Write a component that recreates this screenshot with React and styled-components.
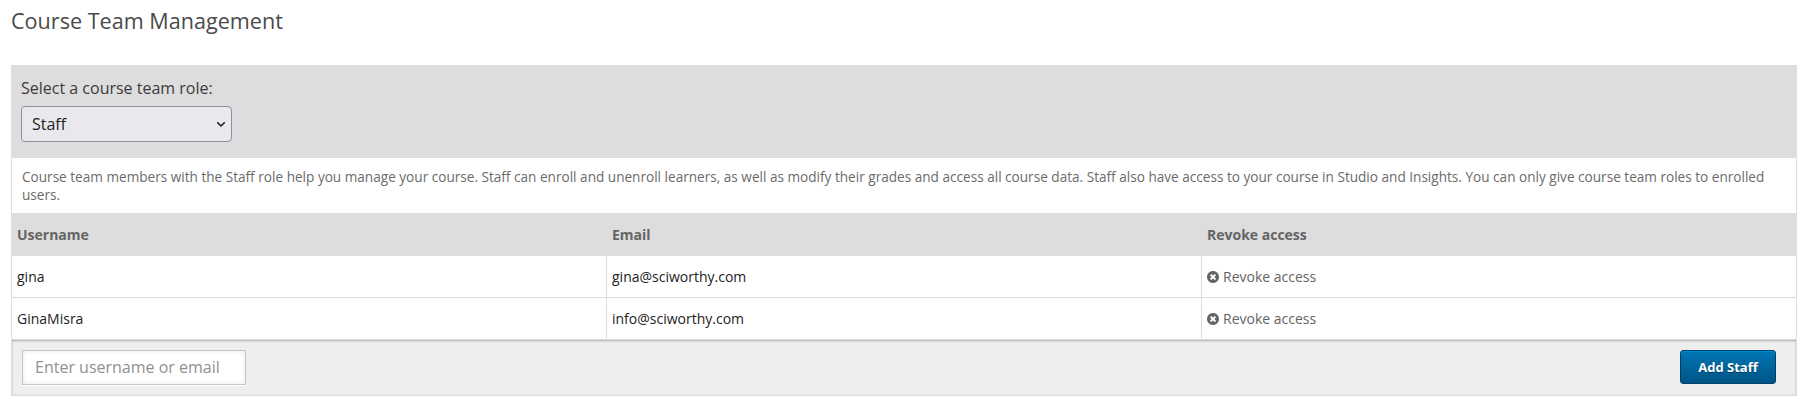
import styled, { createGlobalStyle } from "styled-components";

const GlobalStyle = createGlobalStyle`
  * {
    box-sizing: border-box;
  }
  body {
    margin: 0;
    background: #fff;
    font-family: "Open Sans", "Liberation Sans", sans-serif;
  }
`;

const Section = styled.section`
  padding: 6px 14px 0 11px;
`;

const Title = styled.h3`
  margin: 0 0 29px;
  font-size: 21.6px;
  line-height: 30px;
  font-weight: 400;
  color: #4a4a4a;
`;

const Widget = styled.div`
  border: 1px solid #ddd;
`;

const WidgetHeader = styled.div`
  height: 92px;
  padding: 9px 9px 0;
  display: flex;
  flex-direction: column;
  align-items: flex-start;
  background: #ddd;
`;

const Label = styled.label`
  font-size: 16px;
  line-height: 26px;
  color: #3c3c3c;
`;

const SelectWrap = styled.div`
  display: grid;
  grid-template-columns: 1fr 8px;
  align-items: center;
  width: 211px;
  height: 36px;
  margin-top: 5px;
  padding: 0 6px 0 10px;
  border: 1px solid #8f8f9d;
  border-radius: 4px;
  background: #e9e9ed;

  svg {
    display: block;
  }
`;

const Select = styled.select`
  appearance: none;
  border: none;
  outline: none;
  padding: 0;
  background: transparent;
  font: inherit;
  font-size: 16px;
  line-height: 24px;
  color: #222;
`;

const Description = styled.p`
  height: 55px;
  margin: 0;
  padding: 10px;
  font-size: 13.6px;
  line-height: 18px;
  color: #6b6b6b;
`;

const Row = styled.div`
  display: grid;
  grid-template-columns: 595px 595px 1fr;
  height: 42px;
  border-bottom: 1px solid #ddd;
`;

const HeaderRow = styled(Row)`
  height: 43px;
  background: #ddd;
  border-bottom: none;
`;

const HeaderCell = styled.div`
  padding: 0 5px;
  font-size: 14px;
  font-weight: 700;
  line-height: 44px;
  color: #646464;
`;

const Cell = styled.div`
  padding: 0 5px;
  border-right: 1px solid #ddd;
  font-size: 14px;
  line-height: 41px;
  color: #222;
  &:last-child {
    border-right: none;
  }
`;

const RevokeLink = styled.div`
  display: flex;
  align-items: center;
  gap: 4px;
  color: #646464;
  cursor: pointer;

  svg {
    margin-top: 1px;
  }
`;

const Footer = styled.div`
  display: flex;
  justify-content: space-between;
  align-items: flex-start;
  height: 55px;
  padding: 10px 20px 0 10px;
  background: #eee;
  box-shadow: inset 0 1px 2px 0 #aaa;
`;

const Input = styled.input`
  width: 224px;
  height: 35px;
  padding: 0 12px 2px;
  border: 1px solid #c6c6c6;
  border-radius: 0;
  background: #fff;
  box-shadow: inset 0 0 5px rgba(0, 0, 0, 0.1), 0 1px 0 #fff;
  font: inherit;
  font-size: 16px;
  color: #222;
  &::placeholder {
    color: #919191;
  }
`;

const Button = styled.button`
  width: 96px;
  height: 34px;
  padding: 0;
  border: 1px solid #004368;
  border-radius: 3px;
  background: linear-gradient(#0075b4, #005585);
  box-shadow: inset 0 1px 0 #0089d3;
  font: inherit;
  font-size: 13px;
  font-weight: 700;
  text-shadow: 0 1px 0 #003d5e;
  color: #fff;
  cursor: pointer;
`;

const members = [
  { username: "gina", email: "gina@sciworthy.com" },
  { username: "GinaMisra", email: "info@sciworthy.com" },
];

function RevokeIcon() {
  return (
    <svg width="12" height="12" viewBox="128 128 1536 1536" fill="currentColor">
      <path d="M1277 1122q0-26-19-45l-181-181 181-181q19-19 19-45 0-27-19-46l-90-90q-19-19-46-19-26 0-45 19l-181 181-181-181q-19-19-45-19-27 0-46 19l-90 90q-19 19-19 46 0 26 19 45l181 181-181 181q-19 19-19 45 0 27 19 46l90 90q19 19 46 19 26 0 45-19l181-181 181 181q19 19 45 19 27 0 46-19l90-90q19-19 19-46zm387-226q0 209-103 385.5t-279.5 279.5-385.5 103-385.5-103-279.5-279.5-103-385.5 103-385.5 279.5-279.5 385.5-103 385.5 103 279.5 279.5 103 385.5z" />
    </svg>
  );
}

export default function App() {
  return (
    <>
      <GlobalStyle />
      <Section>
        <Title>Course Team Management</Title>
        <Widget>
          <WidgetHeader>
            <Label htmlFor="role">Select a course team role:</Label>
            <SelectWrap>
              <Select id="role">
                <option>Staff</option>
              </Select>
              <svg width="8" height="5" viewBox="0 0 8 5" fill="none">
                <path
                  d="M0.7 0.7L4 4L7.3 0.7"
                  stroke="#222"
                  strokeWidth="1.6"
                  strokeLinecap="round"
                  strokeLinejoin="round"
                />
              </svg>
            </SelectWrap>
          </WidgetHeader>
          <Description>
            Course team members with the Staff role help you manage your course.
            Staff can enroll and unenroll learners, as well as modify their
            grades and access all course data. Staff also have access to your
            course in Studio and Insights. You can only give course team roles
            to enrolled users.
          </Description>
          <HeaderRow>
            <HeaderCell>Username</HeaderCell>
            <HeaderCell>Email</HeaderCell>
            <HeaderCell>Revoke access</HeaderCell>
          </HeaderRow>
          {members.map((member) => (
            <Row key={member.username}>
              <Cell>{member.username}</Cell>
              <Cell>{member.email}</Cell>
              <Cell>
                <RevokeLink>
                  <RevokeIcon />
                  <span>Revoke access</span>
                </RevokeLink>
              </Cell>
            </Row>
          ))}
          <Footer>
            <Input type="text" placeholder="Enter username or email" />
            <Button>Add Staff</Button>
          </Footer>
        </Widget>
      </Section>
    </>
  );
}
